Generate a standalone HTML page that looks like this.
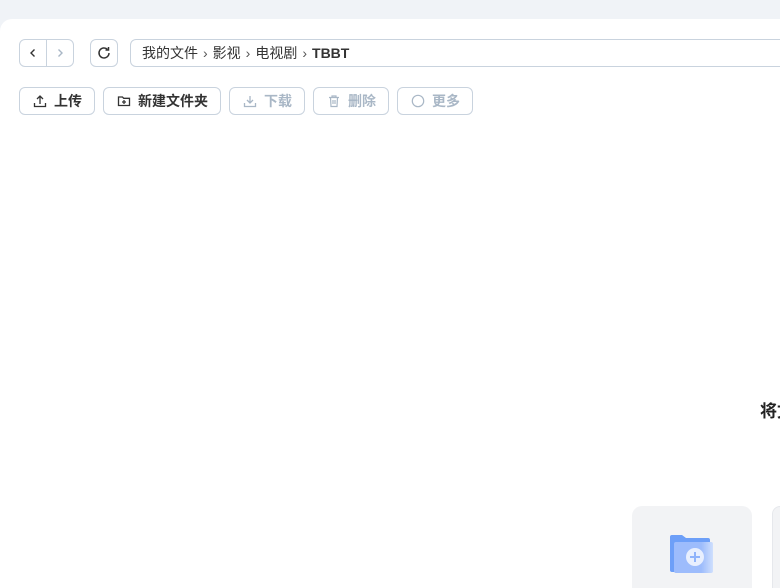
<!DOCTYPE html>
<html style="overflow:hidden"><head><meta charset="utf-8"><style>
*{box-sizing:border-box;margin:0;padding:0}
body{width:780px;height:588px;overflow:hidden;background:#f0f3f7;font-family:"Liberation Sans","Noto Sans CJK SC",sans-serif;position:relative}
.wrap{position:absolute;left:0;top:0;width:780px;height:588px;overflow:hidden}
.panel{position:absolute;left:0;top:19px;width:780px;height:569px;background:#fff;border-radius:12px 0 0 0}
.b{position:absolute;border:1px solid #c9d3de;border-radius:6px;background:#fff;display:flex;align-items:center;font-size:14px}
.btn{height:28px;top:87px;padding-left:13px;font-weight:bold;color:#333}
.btn svg{margin-right:7px}
.dis{color:#a9b7c6}
</style></head><body><div class="wrap">
<div class="panel"></div>
<div class="b" style="left:19px;top:39px;width:55px;height:28px">
 <div style="width:27px;height:100%;border-right:1px solid #c9d3de;display:flex;align-items:center;justify-content:center"><svg width="10" height="10" viewBox="0 0 10 10"><path d="M6.5 1.5 3 5l3.5 3.5" fill="none" stroke="#333" stroke-width="1.4"/></svg></div>
 <div style="flex:1;display:flex;align-items:center;justify-content:center"><svg width="10" height="10" viewBox="0 0 10 10"><path d="M3.5 1.5 7 5 3.5 8.5" fill="none" stroke="#a9b7c6" stroke-width="1.4"/></svg></div>
</div>
<div class="b" style="left:90px;top:39px;width:28px;height:28px;justify-content:center"><svg width="16" height="16" viewBox="0 0 16 16"><path d="M13 8a5 5 0 1 1-1.6-3.7" fill="none" stroke="#333" stroke-width="1.5"/><path d="M12.5 2v3h-3" fill="none" stroke="#333" stroke-width="1.5"/></svg></div>
<div class="b" style="left:130px;top:39px;width:660px;height:28px;padding-left:11px;color:#333;font-size:14px;overflow:hidden">我的文件 <span style="margin:0 5px;color:#555">›</span> 影视 <span style="margin:0 5px;color:#555">›</span> 电视剧 <span style="margin:0 5px;color:#555">›</span> <b style="color:#333">TBBT</b></div>

<div class="b btn" style="left:19px;width:76px"><svg width="14" height="14" viewBox="0 0 14 14"><path d="M7 10V2M4 5l3-3 3 3M1.5 9v3.5h11V9" fill="none" stroke="#333" stroke-width="1.3"/></svg>上传</div>
<div class="b btn" style="left:103px;width:118px"><svg width="14" height="14" viewBox="0 0 14 14"><path d="M1.5 3h4l1.2 1.3h5.8v7.2h-11z" fill="none" stroke="#333" stroke-width="1.3"/><path d="M7 6v4M5 8h4" stroke="#333" stroke-width="1.3"/></svg>新建文件夹</div>
<div class="b btn dis" style="left:229px;width:76px"><svg width="14" height="14" viewBox="0 0 14 14"><path d="M7 2v7M4 6l3 3 3-3M1.5 9v3.5h11V9" fill="none" stroke="#a9b7c6" stroke-width="1.3"/></svg>下载</div>
<div class="b btn dis" style="left:313px;width:76px"><svg width="14" height="14" viewBox="0 0 14 14"><path d="M2 3.5h10M5 3.5V2h4v1.5M3.5 3.5l.5 9h6l.5-9M6 6v4M8 6v4" fill="none" stroke="#a9b7c6" stroke-width="1.2"/></svg>删除</div>
<div class="b btn dis" style="left:397px;width:76px"><svg width="14" height="14" viewBox="0 0 14 14"><circle cx="7" cy="7" r="5.7" fill="none" stroke="#a9b7c6" stroke-width="1.2"/></svg>更多</div>

<div style="position:absolute;left:760px;top:397px;width:20px;overflow:hidden;font-size:17px;font-weight:bold;color:#222;white-space:nowrap">将文件拖拽到此处</div>
<div style="position:absolute;left:632px;top:506px;width:120px;height:82px;background:#f2f3f5;border-radius:10px 10px 0 0"></div>
<div style="position:absolute;left:772px;top:506px;width:8px;height:82px;background:#f2f3f5;border-radius:10px 0 0 0;border:1px solid #e6e8ec;border-right:none;border-bottom:none"></div>
<svg style="position:absolute;left:669px;top:533px" width="44" height="42" viewBox="0 0 44 42"><defs><linearGradient id="g" x1="0" x2="1"><stop offset="0.7" stop-color="#9dbcfc"/><stop offset="1" stop-color="#cfdffd"/></linearGradient></defs><path d="M1 4a2 2 0 0 1 2-2h10l4 3h22a2 2 0 0 1 2 2v30a2 2 0 0 1-2 2H3a2 2 0 0 1-2-2z" fill="#6d9ff8"/><rect x="5" y="9" width="39" height="31" rx="2" fill="url(#g)"/><circle cx="26" cy="24" r="9" fill="#e8effe"/><path d="M26 19v10M21 24h10" stroke="#8fb3fb" stroke-width="2"/></svg>
</div></body></html>
